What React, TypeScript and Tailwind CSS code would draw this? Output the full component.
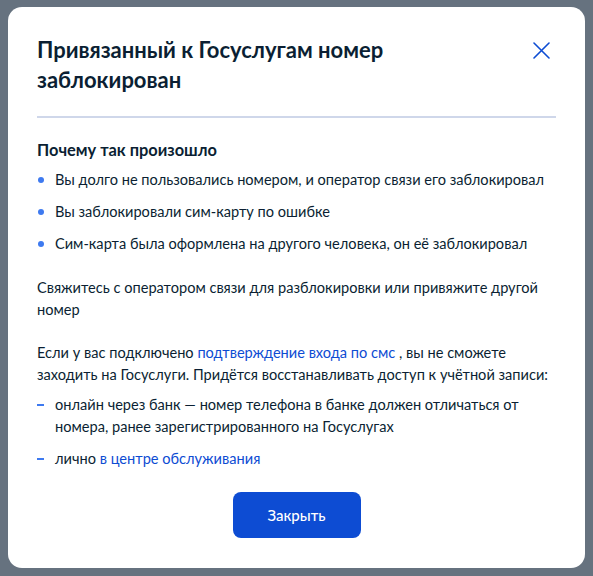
import React from "react";

export default function App() {
  return (
    <div
      className="w-full h-[576px] bg-[#66727f] pt-[7px] pl-[8px]"
      style={{ fontFamily: "Lato, 'Noto Sans', sans-serif" }}
    >
      <div className="w-[577px] h-[561px] rounded-[14px] bg-white px-[29px] pt-[28px] text-[#0b1f33] flex flex-col">
        <div className="flex justify-between items-start">
          <h1 className="text-[22px] leading-[30px] font-bold w-[420px]">
            Привязанный к Госуслугам номер заблокирован
          </h1>
          <button className="mt-[7px] mr-[6px] text-[#0d4cd3]" aria-label="Закрыть">
            <svg width="17" height="17" viewBox="0 0 17 17" fill="none">
              <path d="M1 1L16 16M16 1L1 16" stroke="#0d4cd3" strokeWidth="1.6" strokeLinecap="round" />
            </svg>
          </button>
        </div>
        <div className="mt-[21px] border-t-2 border-[#cfd7ea]" />
        <h2 className="mt-[20px] text-[16.4px] leading-[24px] font-bold">Почему так произошло</h2>
        <ul className="mt-[7px] flex flex-col gap-[10px] text-[14.6px] leading-[22px]">
          {[
            "Вы долго не пользовались номером, и оператор связи его заблокировал",
            "Вы заблокировали сим-карту по ошибке",
            "Сим-карта была оформлена на другого человека, он её заблокировал",
          ].map((t) => (
            <li key={t} className="flex items-start">
              <span className="mt-[8px] ml-[1px] mr-[11px] w-[6px] h-[6px] rounded-full bg-[#3e7af0] shrink-0" />
              <span>{t}</span>
            </li>
          ))}
        </ul>
        <p className="mt-[22px] text-[14.6px] leading-[22px]">
          Свяжитесь с оператором связи для разблокировки или привяжите другой номер
        </p>
        <p className="mt-[21px] text-[14.6px] leading-[22px]">
          Если у вас подключено <span className="text-[#0d4cd3]">подтверждение входа по смс</span> , вы не сможете
          заходить на Госуслуги. Придётся восстанавливать доступ к учётной записи:
        </p>
        <ul className="mt-[8px] flex flex-col gap-[10px] text-[14.6px] leading-[22px]">
          <li className="flex items-start">
            <span className="mt-[10px] mr-[11px] w-[7px] h-[2px] bg-[#3e7af0] shrink-0" />
            <span>онлайн через банк — номер телефона в банке должен отличаться от номера, ранее зарегистрированного на Госуслугах</span>
          </li>
          <li className="flex items-start">
            <span className="mt-[10px] mr-[11px] w-[7px] h-[2px] bg-[#3e7af0] shrink-0" />
            <span>
              лично <span className="text-[#0d4cd3]">в центре обслуживания</span>
            </span>
          </li>
        </ul>
        <div className="mt-[22px] flex justify-center">
          <button className="w-[128px] h-[46px] rounded-[8px] bg-[#0d4cd3] text-white text-[15px] font-medium">
            Закрыть
          </button>
        </div>
      </div>
    </div>
  );
}
